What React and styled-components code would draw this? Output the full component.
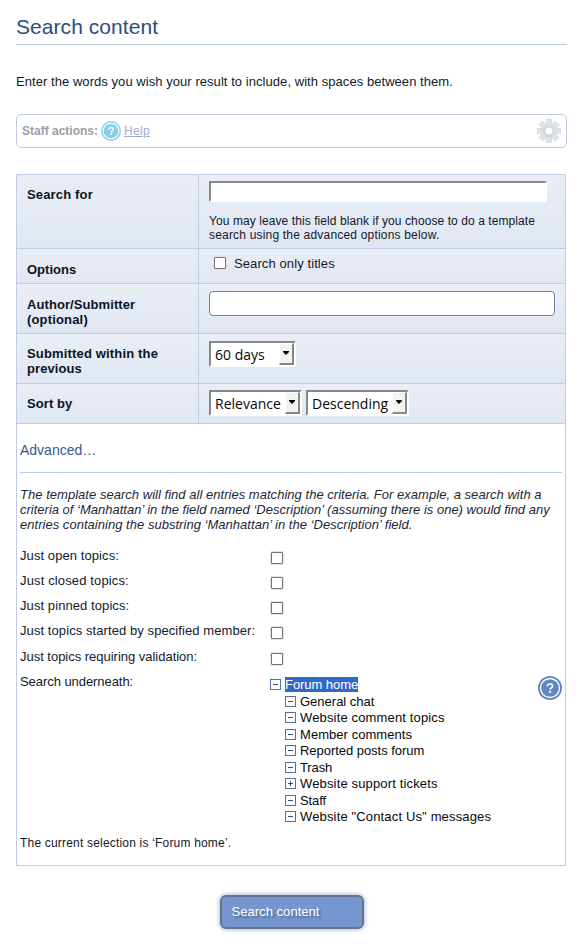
import React from 'react';
import styled, { createGlobalStyle } from 'styled-components';

const GlobalStyle = createGlobalStyle`
  * { box-sizing: border-box; }
  body {
    margin: 0;
    background: #fff;
    color: #101a2b;
    font: 13px/15px "Liberation Sans", Arial, sans-serif;
  }
`;

const Page = styled.main`
  display: flex;
  flex-direction: column;
  width: 583px;
  height: 944px;
  padding: 14px 16px 0;
  overflow: hidden;
`;

const Title = styled.h1`
  margin: 0;
  height: 31px;
  border-bottom: 1px solid #b9cbe5;
  color: #2c4d82;
  font-size: 21px;
  font-weight: 400;
  line-height: 26px;
  letter-spacing: 0.06px;
`;

const Line = styled.span`
  display: block;
  white-space: nowrap;
  letter-spacing: ${({ $track = 0.08 }) => $track}px;
`;

const Intro = styled.p`
  margin: 29px 0 25px;
`;

const StaffBar = styled.section`
  display: flex;
  align-items: center;
  height: 34px;
  padding: 0 5px;
  border: 1px solid #bfcade;
  border-radius: 5px;
  & > svg:last-child { margin-left: auto; }
`;

const StaffLabel = styled.strong`
  width: 79px;
  color: #9a9ea5;
  font-size: 12px;
  white-space: nowrap;
`;

const HelpLink = styled.a`
  margin-left: 3px;
  color: #99acca;
  font-size: 12px;
  letter-spacing: 0.35px;
  text-decoration: underline;
`;

const Panel = styled.section`
  display: flex;
  flex-direction: column;
  width: 550px;
  height: 692px;
  margin-top: 26px;
  border: 1px solid #bfcce2;
`;

const FieldRow = styled.div`
  display: grid;
  grid-template-columns: 182px 1fr;
  height: ${({ $h }) => $h}px;
  border-bottom: 1px solid #bfcce4;
  background: linear-gradient(#e9eef5, #e1e7f2);
`;

const FieldLabel = styled.label`
  padding: ${({ $top }) => $top}px 0 0 10px;
  border-right: 1px solid #bfcce4;
  color: #0b1426;
  font-weight: 700;
`;

const FieldBody = styled.div`
  display: flex;
  flex-direction: ${({ $column }) => ($column ? 'column' : 'row')};
  align-items: flex-start;
  gap: ${({ $gap = 4 }) => $gap}px;
  padding: ${({ $top }) => $top}px 0 0 10px;
`;

const InsetInput = styled.input`
  width: 338px;
  height: 21px;
  padding: 0 2px;
  border: 2px solid;
  border-color: #888 #fff #fff #888;
  border-radius: 0;
  background: #fff;
  outline: none;
`;

const RoundInput = styled.input`
  width: 346px;
  height: 25px;
  padding: 0 4px;
  border: 1px solid #6b81a5;
  border-radius: 4px;
  background: #fff;
  outline: none;
`;

const Hint = styled.div`
  font-size: 12px;
  line-height: 14px;
`;

const Check = styled.input.attrs({ type: 'checkbox' })`
  appearance: none;
  flex: none;
  width: 12px;
  height: 12px;
  margin: 0;
  border: 1px solid #77736c;
  border-radius: 1px;
  background: #fff;
  box-shadow: 0 0 0 1px #e6e4e0;
`;

const OptionLabel = styled.label`
  display: flex;
  gap: 8px;
  padding-left: 5px;
  & > input { margin-top: 1px; }
`;

const SelectBox = styled.div`
  display: flex;
  justify-content: space-between;
  width: ${({ $w }) => $w}px;
  height: 26px;
  padding-left: 4px;
  border: 2px solid;
  border-color: #888 #fff #fff #888;
  background: #fff;
  color: #080808;
  font: 14px/23px "Open Sans", "Noto Sans", sans-serif;
`;

const SelectArrow = styled.span`
  display: flex;
  align-items: center;
  justify-content: center;
  flex: none;
  width: 15px;
  height: 22px;
  padding-bottom: 1px;
  border: solid;
  border-width: 1px 2px 2px 1px;
  border-color: #fff #888 #888 #fff;
  background: #f3f3f2;
`;

const Advanced = styled.div`
  padding: 0 3px;
`;

const AdvancedTitle = styled.h2`
  margin: 0;
  height: 49px;
  padding-top: 19px;
  border-bottom: 1px solid #b9cbe5;
  color: #3b5888;
  font-size: 14px;
  font-weight: 400;
  line-height: 15px;
`;

const Explanation = styled.p`
  margin: 14px 0 16px;
  color: #1d2736;
  font-style: italic;
`;

const CriteriaRow = styled.div`
  display: grid;
  grid-template-columns: 251px 1fr;
  height: ${({ $h = 25 }) => $h}px;
  & > input { margin-top: 4px; }
`;

const TreeArea = styled.div`
  display: flex;
  justify-content: space-between;
  align-items: flex-start;
  margin-left: -1px;
  & > svg { margin: 2px 0 0; }
`;

const Tree = styled.ul`
  margin: 3px 0 0;
  padding: 0;
  list-style: none;
`;

const TreeItem = styled.li`
  display: flex;
  gap: 4px;
  height: 16.5px;
  padding-left: ${({ $level }) => $level * 15}px;
  color: #080808;
  & > svg { flex: none; margin-top: 2px; }
`;

const TreeText = styled(Line)`
  height: 15px;
  color: ${({ $selected }) => ($selected ? '#fff' : 'inherit')};
  background: ${({ $selected }) => ($selected ? '#316ac5' : 'transparent')};
`;

const Selection = styled.p`
  margin: 1px 0 0;
  font-size: 12px;
`;

const SubmitButton = styled.button`
  align-self: center;
  width: 144px;
  height: 34px;
  margin: 29px 0 0;
  padding: 0 10px 2px;
  border: 2px solid #66748d;
  border-radius: 6px;
  background: #7596cf;
  box-shadow: 0 0 5px #8fa5c9;
  color: #fff;
  font: 13px/15px "Liberation Sans", Arial, sans-serif;
  letter-spacing: 0.04px;
  text-align: left;
  text-shadow: 2px 2px 2px #4f678f;
`;

const HelpBadge = ({ size, color }) => (
  <svg width={size} height={size} viewBox="0 0 24 24" aria-hidden="true">
    <circle cx="12" cy="12" r="12" fill={color} />
    <circle cx="12" cy="12" r="9.5" fill="none" stroke="#fff" strokeWidth="1.3" />
    <path d="M9.4 10.2 Q9.4 8 12 8 Q14.6 8 14.6 10 Q14.6 11.2 13.1 12.1 Q12.1 12.7 12.1 13.6" fill="none" stroke="#fff" strokeWidth="1.6" />
    <rect x="11.1" y="14.8" width="2" height="2" fill="#fff" />
  </svg>
);

const Gear = () => (
  <svg width="24" height="24" viewBox="0 0 24 24" aria-hidden="true">
    <g fill="#dfe2e9" stroke="#d0d3dc" strokeWidth="0.6">
      {[0, 45, 90, 135].map((a) => (
        <rect key={a} x="9.4" y="0.4" width="5.2" height="23.2" transform={`rotate(${a} 12 12)`} />
      ))}
    </g>
    <circle cx="12" cy="12" r="7.6" fill="#dcdfe6" />
    <circle cx="12" cy="12" r="5" fill="none" stroke="#cdd1da" />
    <circle cx="12" cy="12" r="3.2" fill="#fff" />
  </svg>
);

const Toggle = ({ plus }) => (
  <svg width="11" height="11" viewBox="0 0 11 11" aria-hidden="true">
    <rect x="0.5" y="0.5" width="10" height="10" fill="#fff" stroke="#566f9d" />
    <path d={plus ? 'M3 5.5H8M5.5 3V8' : 'M3 5.5H8'} stroke="#344f80" />
  </svg>
);

const Select = ({ width, value }) => (
  <SelectBox $w={width} role="combobox" aria-expanded="false">
    {value}
    <SelectArrow>
      <svg width="6" height="4" viewBox="0 0 6 4"><path d="M0 0H6V1L3 4L0 1Z" fill="#000" /></svg>
    </SelectArrow>
  </SelectBox>
);

const criteria = [
  { text: 'Just open topics:' },
  { text: 'Just closed topics:', track: 0.14 },
  { text: 'Just pinned topics:' },
  { text: 'Just topics started by specified member:', h: 26 },
  { text: 'Just topics requiring validation:', track: -0.02 },
];

const forums = [
  { text: 'Forum home', level: 0, track: -0.06, selected: true },
  { text: 'General chat', level: 1, track: 0 },
  { text: 'Website comment topics', level: 1 },
  { text: 'Member comments', level: 1, track: 0.05 },
  { text: 'Reported posts forum', level: 1, track: -0.04 },
  { text: 'Trash', level: 1, track: -0.1 },
  { text: 'Website support tickets', level: 1 },
  { text: 'Staff', level: 1, track: -0.1 },
  { text: 'Website "Contact Us" messages', level: 1 },
];

export default function App() {
  return (
    <>
      <GlobalStyle />
      <Page>
        <Title>Search content</Title>
        <Intro>
          <Line $track={0.055}>Enter the words you wish your result to include, with spaces between them.</Line>
        </Intro>
        <StaffBar>
          <StaffLabel>Staff actions:</StaffLabel>
          <HelpBadge size={20} color="#8dcfe9" />
          <HelpLink>Help</HelpLink>
          <Gear />
        </StaffBar>
        <Panel>
          <FieldRow $h={74}>
            <FieldLabel $top={12}><Line $track={0.16}>Search for</Line></FieldLabel>
            <FieldBody $top={6} $column $gap={12}>
              <InsetInput aria-label="Search for" />
              <Hint>
                <Line $track={0.08}>You may leave this field blank if you choose to do a template</Line>
                <Line $track={0.19}>search using the advanced options below.</Line>
              </Hint>
            </FieldBody>
          </FieldRow>
          <FieldRow $h={35}>
            <FieldLabel $top={13}><Line $track={0}>Options</Line></FieldLabel>
            <FieldBody $top={7}>
              <OptionLabel><Check /><Line $track={0.1}>Search only titles</Line></OptionLabel>
            </FieldBody>
          </FieldRow>
          <FieldRow $h={50}>
            <FieldLabel $top={13}>
              <Line>Author/Submitter</Line>
              <Line $track={0.17}>(optional)</Line>
            </FieldLabel>
            <FieldBody $top={7}><RoundInput aria-label="Author/Submitter" /></FieldBody>
          </FieldRow>
          <FieldRow $h={50}>
            <FieldLabel $top={12}>
              <Line $track={0.16}>Submitted within the</Line>
              <Line>previous</Line>
            </FieldLabel>
            <FieldBody $top={7}><Select width={87} value="60 days" /></FieldBody>
          </FieldRow>
          <FieldRow $h={40}>
            <FieldLabel $top={12}><Line>Sort by</Line></FieldLabel>
            <FieldBody $top={6}>
              <Select width={93} value="Relevance" />
              <Select width={103} value="Descending" />
            </FieldBody>
          </FieldRow>
          <Advanced>
            <AdvancedTitle><Line $track={0}>Advanced…</Line></AdvancedTitle>
            <Explanation>
              <Line $track={0.03}>The template search will find all entries matching the criteria. For example, a search with a</Line>
              <Line $track={0}>criteria of ‘Manhattan’ in the field named ‘Description’ (assuming there is one) would find any</Line>
              <Line $track={0.03}>entries containing the substring ‘Manhattan’ in the ‘Description’ field.</Line>
            </Explanation>
            {criteria.map(({ text, h, track }) => (
              <CriteriaRow key={text} $h={h}>
                <Line $track={track}>{text}</Line>
                <Check aria-label={text} />
              </CriteriaRow>
            ))}
            <CriteriaRow $h={161}>
              <Line $track={-0.06}>Search underneath:</Line>
              <TreeArea>
                <Tree>
                  {forums.map(({ text, level, track = 0.15, selected }) => (
                    <TreeItem key={text} $level={level}>
                      <Toggle plus={text === 'Website support tickets'} />
                      <TreeText $track={track} $selected={selected}>{text}</TreeText>
                    </TreeItem>
                  ))}
                </Tree>
                <HelpBadge size={24} color="#6288c3" />
              </TreeArea>
            </CriteriaRow>
            <Selection><Line $track={0.19}>The current selection is ‘Forum home’.</Line></Selection>
          </Advanced>
        </Panel>
        <SubmitButton>Search content</SubmitButton>
      </Page>
    </>
  );
}
